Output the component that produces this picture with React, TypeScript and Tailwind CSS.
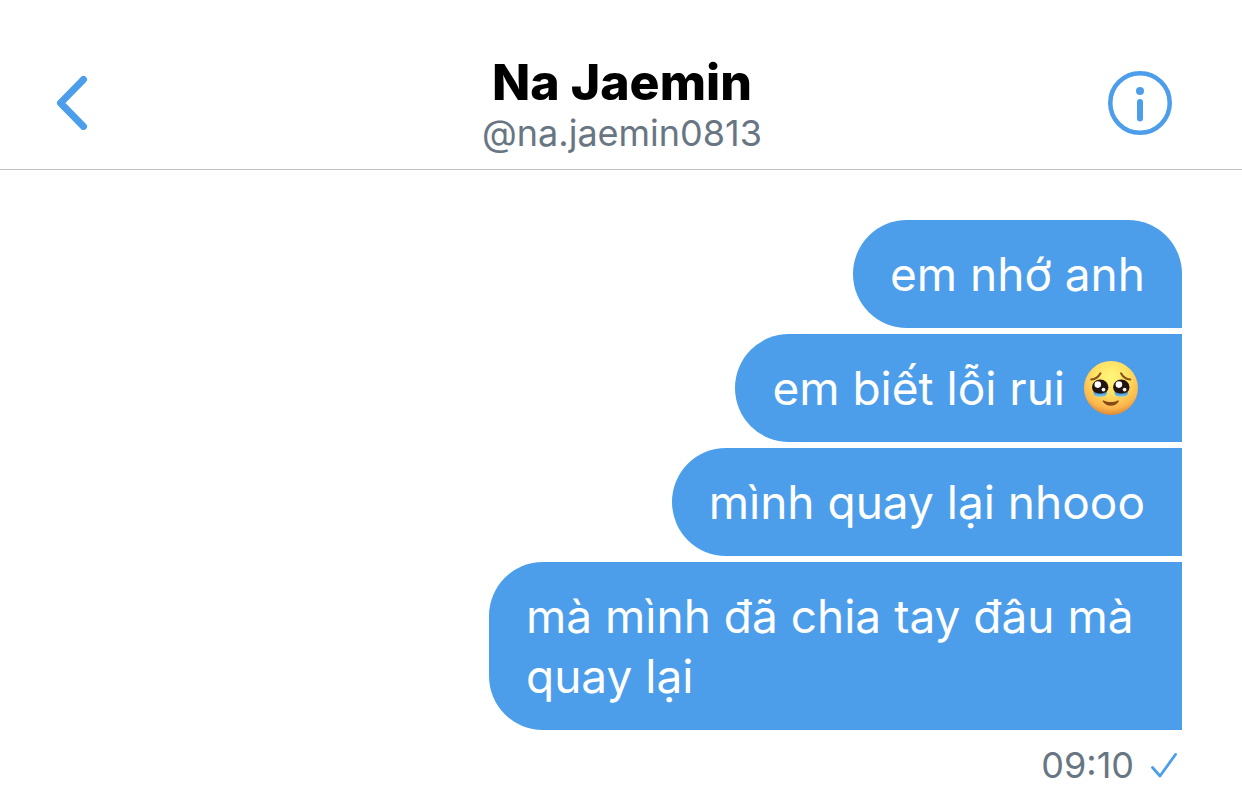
import React from 'react';

interface Message {
  id: number;
  text: string;
  withEmoji?: boolean;
}

const MESSAGES: Message[] = [
  { id: 1, text: 'em nhớ anh' },
  { id: 2, text: 'em biết lỗi rui', withEmoji: true },
  { id: 3, text: 'mình quay lại nhooo' },
  { id: 4, text: 'mà mình đã chia tay đâu mà quay lại' },
];

/**
 * Face holding back tears
 */
function TearyFace() {
  return (
    <svg className="mr-1.5 h-14 w-14 flex-shrink-0" viewBox="0 0 56 56" role="img" aria-label="🥹">
      <defs>
        <radialGradient id="face" cx="0.5" cy="0.3" r="0.72">
          <stop offset="0" stopColor="#fff67c" />
          <stop offset="0.45" stopColor="#ffe062" />
          <stop offset="0.8" stopColor="#fcb64c" />
          <stop offset="1" stopColor="#d98232" />
        </radialGradient>
        <linearGradient id="tear" x1="0" y1="0" x2="0" y2="1">
          <stop offset="0" stopColor="#2f7fc4" />
          <stop offset="1" stopColor="#86cdf2" />
        </linearGradient>
      </defs>
      <circle cx="28" cy="28" r="27" fill="url(#face)" />
      {/* Eyebrows */}
      <path d="M8.2 19.5c4.300-.200 7.300-2.400 9.300-6.200" fill="none" stroke="#85501c" strokeWidth="2" strokeLinecap="round" />
      <path d="M47.300 19.500c-4.300-.200-7.300-2.400-9.300-6.200" fill="none" stroke="#85501c" strokeWidth="2" strokeLinecap="round" />
      {/* Eyes */}
      <ellipse cx="17.200" cy="27.200" rx="8.200" ry="7.600" fill="#241410" />
      <ellipse cx="38.300" cy="27.200" rx="8.200" ry="7.600" fill="#241410" />
      <path d="M10.700 31.500c4 2.700 9 2.700 13 0 .7 4-2.500 5.300-6.500 5.300s-7.200-1.300-6.500-5.300z" fill="url(#tear)" />
      <path d="M31.800 31.500c4 2.700 9 2.700 13 0 .7 4-2.500 5.300-6.500 5.300s-7.200-1.300-6.500-5.300z" fill="url(#tear)" />
      <circle cx="14.800" cy="24.600" r="3.300" fill="#fff" />
      <circle cx="35.900" cy="24.600" r="3.300" fill="#fff" />
      <circle cx="20.500" cy="29.600" r="1.900" fill="#f4f8fb" />
      <circle cx="41.600" cy="29.600" r="1.900" fill="#f4f8fb" />
      {/* Mouth */}
      <path d="M20.800 40.500c4.300 2 9.700 2 14 0 .9-.4 1.500.3 1 1-3.600 5.600-12.400 5.600-16 0-.5-.7.100-1.400 1-1z" fill="#87481a" />
    </svg>
  );
}

function MessageBubble({ message }: { message: Message }) {
  return (
    <li className="flex max-w-[693px] items-center gap-[18px] rounded-l-[54px] bg-[#4c9eeb] px-[37px] py-6 text-[46px] leading-[60px] text-white first:rounded-tr-[54px]">
      <p>{message.text}</p>
      {message.withEmoji && <TearyFace />}
    </li>
  );
}

export default function App() {
  return (
    <div className="min-h-screen bg-white font-['Inter','Noto_Sans',sans-serif]">
      {/* Header */}
      <header className="flex items-start justify-between border-b border-[#bdc0c3] pb-[13px] pl-14 pr-[70px] pt-[54px]">
        <button type="button" aria-label="Back" className="mt-5 w-20 text-[#4c9eeb]">
          <svg className="h-14 w-8" viewBox="0 0 32 56" fill="none" stroke="currentColor">
            <path d="M27.500 5.500L4.500 29l23 23.500" strokeWidth="7" strokeLinecap="round" strokeLinejoin="round" />
          </svg>
        </button>
        <div className="text-center">
          <h1 className="text-[50px] font-extrabold leading-14 text-black">Na Jaemin</h1>
          <p className="text-4xl leading-[46px] text-[#687684]">@na.jaemin0813</p>
        </div>
        <button type="button" aria-label="Conversation info" className="mt-[17px] text-[#4c9eeb]">
          <svg className="h-16 w-16" viewBox="0 0 64 64" fill="none" stroke="currentColor">
            <circle cx="32" cy="32" r="29.750" strokeWidth="4.500" />
            <circle cx="32" cy="20" r="4" fill="currentColor" stroke="none" />
            <path d="M32 31v16.500" strokeWidth="6" strokeLinecap="round" />
          </svg>
        </button>
      </header>

      {/* Messages */}
      <main className="flex flex-col items-end px-[60px] pt-[50px]">
        <ul className="flex flex-col items-end gap-[6px]">
          {MESSAGES.map((message) => (
            <MessageBubble key={message.id} message={message} />
          ))}
        </ul>
        <div className="mt-3 flex items-center gap-4 pr-1">
          <time className="text-4xl leading-[46px] text-[#687684]">09:10</time>
          <svg className="h-7 w-7 text-[#4c9eeb]" viewBox="0 0 28 28" fill="none" stroke="currentColor" role="img" aria-label="Sent">
            <path d="M2.500 16.500l7.500 8.500L25.500 3.500" strokeWidth="2.800" strokeLinecap="round" strokeLinejoin="round" />
          </svg>
        </div>
      </main>
    </div>
  );
}
